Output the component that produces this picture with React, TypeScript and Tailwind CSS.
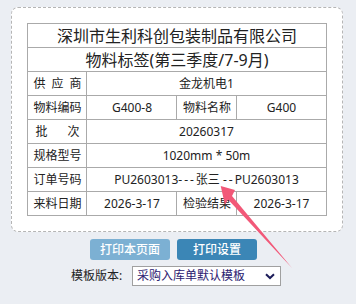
import React from "react";

const cell = "border border-[#aaaaaa] h-[24px] p-0 text-center align-middle";

export default function App() {
  return (
    <div className="relative w-[356px] h-[304px] bg-[#ebeef3] overflow-hidden font-['Noto_Sans','Noto_Sans_CJK_SC',sans-serif] text-[#222]">
      <div className="pt-[7px] pl-[11px]">
        <div className="w-[332px] h-[225px] bg-white border border-dashed border-[#b5b5b5] rounded-[7px] pt-[15px]">
          <table className="mx-auto w-[298px] border-collapse table-fixed text-[12px] leading-none">
            <colgroup>
              <col className="w-[59px]" />
              <col className="w-[90px]" />
              <col className="w-[60px]" />
              <col className="w-[89px]" />
            </colgroup>
            <tbody>
              <tr>
                <td colSpan={4} className={`${cell} text-[16px]`}>深圳市生利科创包装制品有限公司</td>
              </tr>
              <tr>
                <td colSpan={4} className={`${cell} text-[16px]`}>物料标签(第三季度/7-9月)</td>
              </tr>
              <tr>
                <td className={cell}>
                  <div className="flex justify-between px-[5px]"><span>供</span><span>应</span><span>商</span></div>
                </td>
                <td colSpan={3} className={cell}>金龙机电1</td>
              </tr>
              <tr>
                <td className={cell}>物料编码</td>
                <td className={cell}>G400-8</td>
                <td className={cell}>物料名称</td>
                <td className={cell}>G400</td>
              </tr>
              <tr>
                <td className={cell}>
                  <div className="flex justify-between px-[7px]"><span>批</span><span>次</span></div>
                </td>
                <td colSpan={3} className={cell}>20260317</td>
              </tr>
              <tr>
                <td className={cell}>规格型号</td>
                <td colSpan={3} className={cell}>1020mm * 50m</td>
              </tr>
              <tr>
                <td className={cell}>订单号码</td>
                <td colSpan={3} className={cell}>
                  PU2603013<span className="tracking-[2px]">---</span>张三 <span className="tracking-[2px]">--</span>PU2603013
                </td>
              </tr>
              <tr>
                <td className={cell}>来料日期</td>
                <td className={cell}>2026-3-17</td>
                <td className={cell}>检验结果</td>
                <td className={cell}>2026-3-17</td>
              </tr>
            </tbody>
          </table>
        </div>
      </div>

      <div className="flex gap-[7px] pl-[90px] mt-[7px]">
        <button className="w-[80px] h-[21px] rounded-[3px] bg-[#7cb0d3] text-white text-[12px] font-medium leading-none">打印本页面</button>
        <button className="w-[80px] h-[21px] rounded-[3px] bg-[#3b86b6] text-white text-[12px] font-medium leading-none">打印设置</button>
      </div>

      <div className="flex items-center pl-[71px] mt-[6px] text-[12px]">
        <span className="w-[61px]">模板版本:</span>
        <div className="w-[149px] h-[20px] border border-[#a0a0a0] bg-white flex items-center justify-between pl-[4px] pr-[5px] text-[#2b2070]">
          <span>采购入库单默认模板</span>
          <svg width="10" height="7" viewBox="0 0 10 7">
            <path d="M1 1.2 L5 5 L9 1.2" fill="none" stroke="#1d1d5a" strokeWidth="2" />
          </svg>
        </div>
      </div>

      <svg className="absolute left-0 top-0 pointer-events-none" width="356" height="304" viewBox="0 0 356 304">
        <polygon
          points="220.7,186 235,190 232,196 292,268 228,199.5 225,205"
          fill="#f25878"
        />
      </svg>
    </div>
  );
}
